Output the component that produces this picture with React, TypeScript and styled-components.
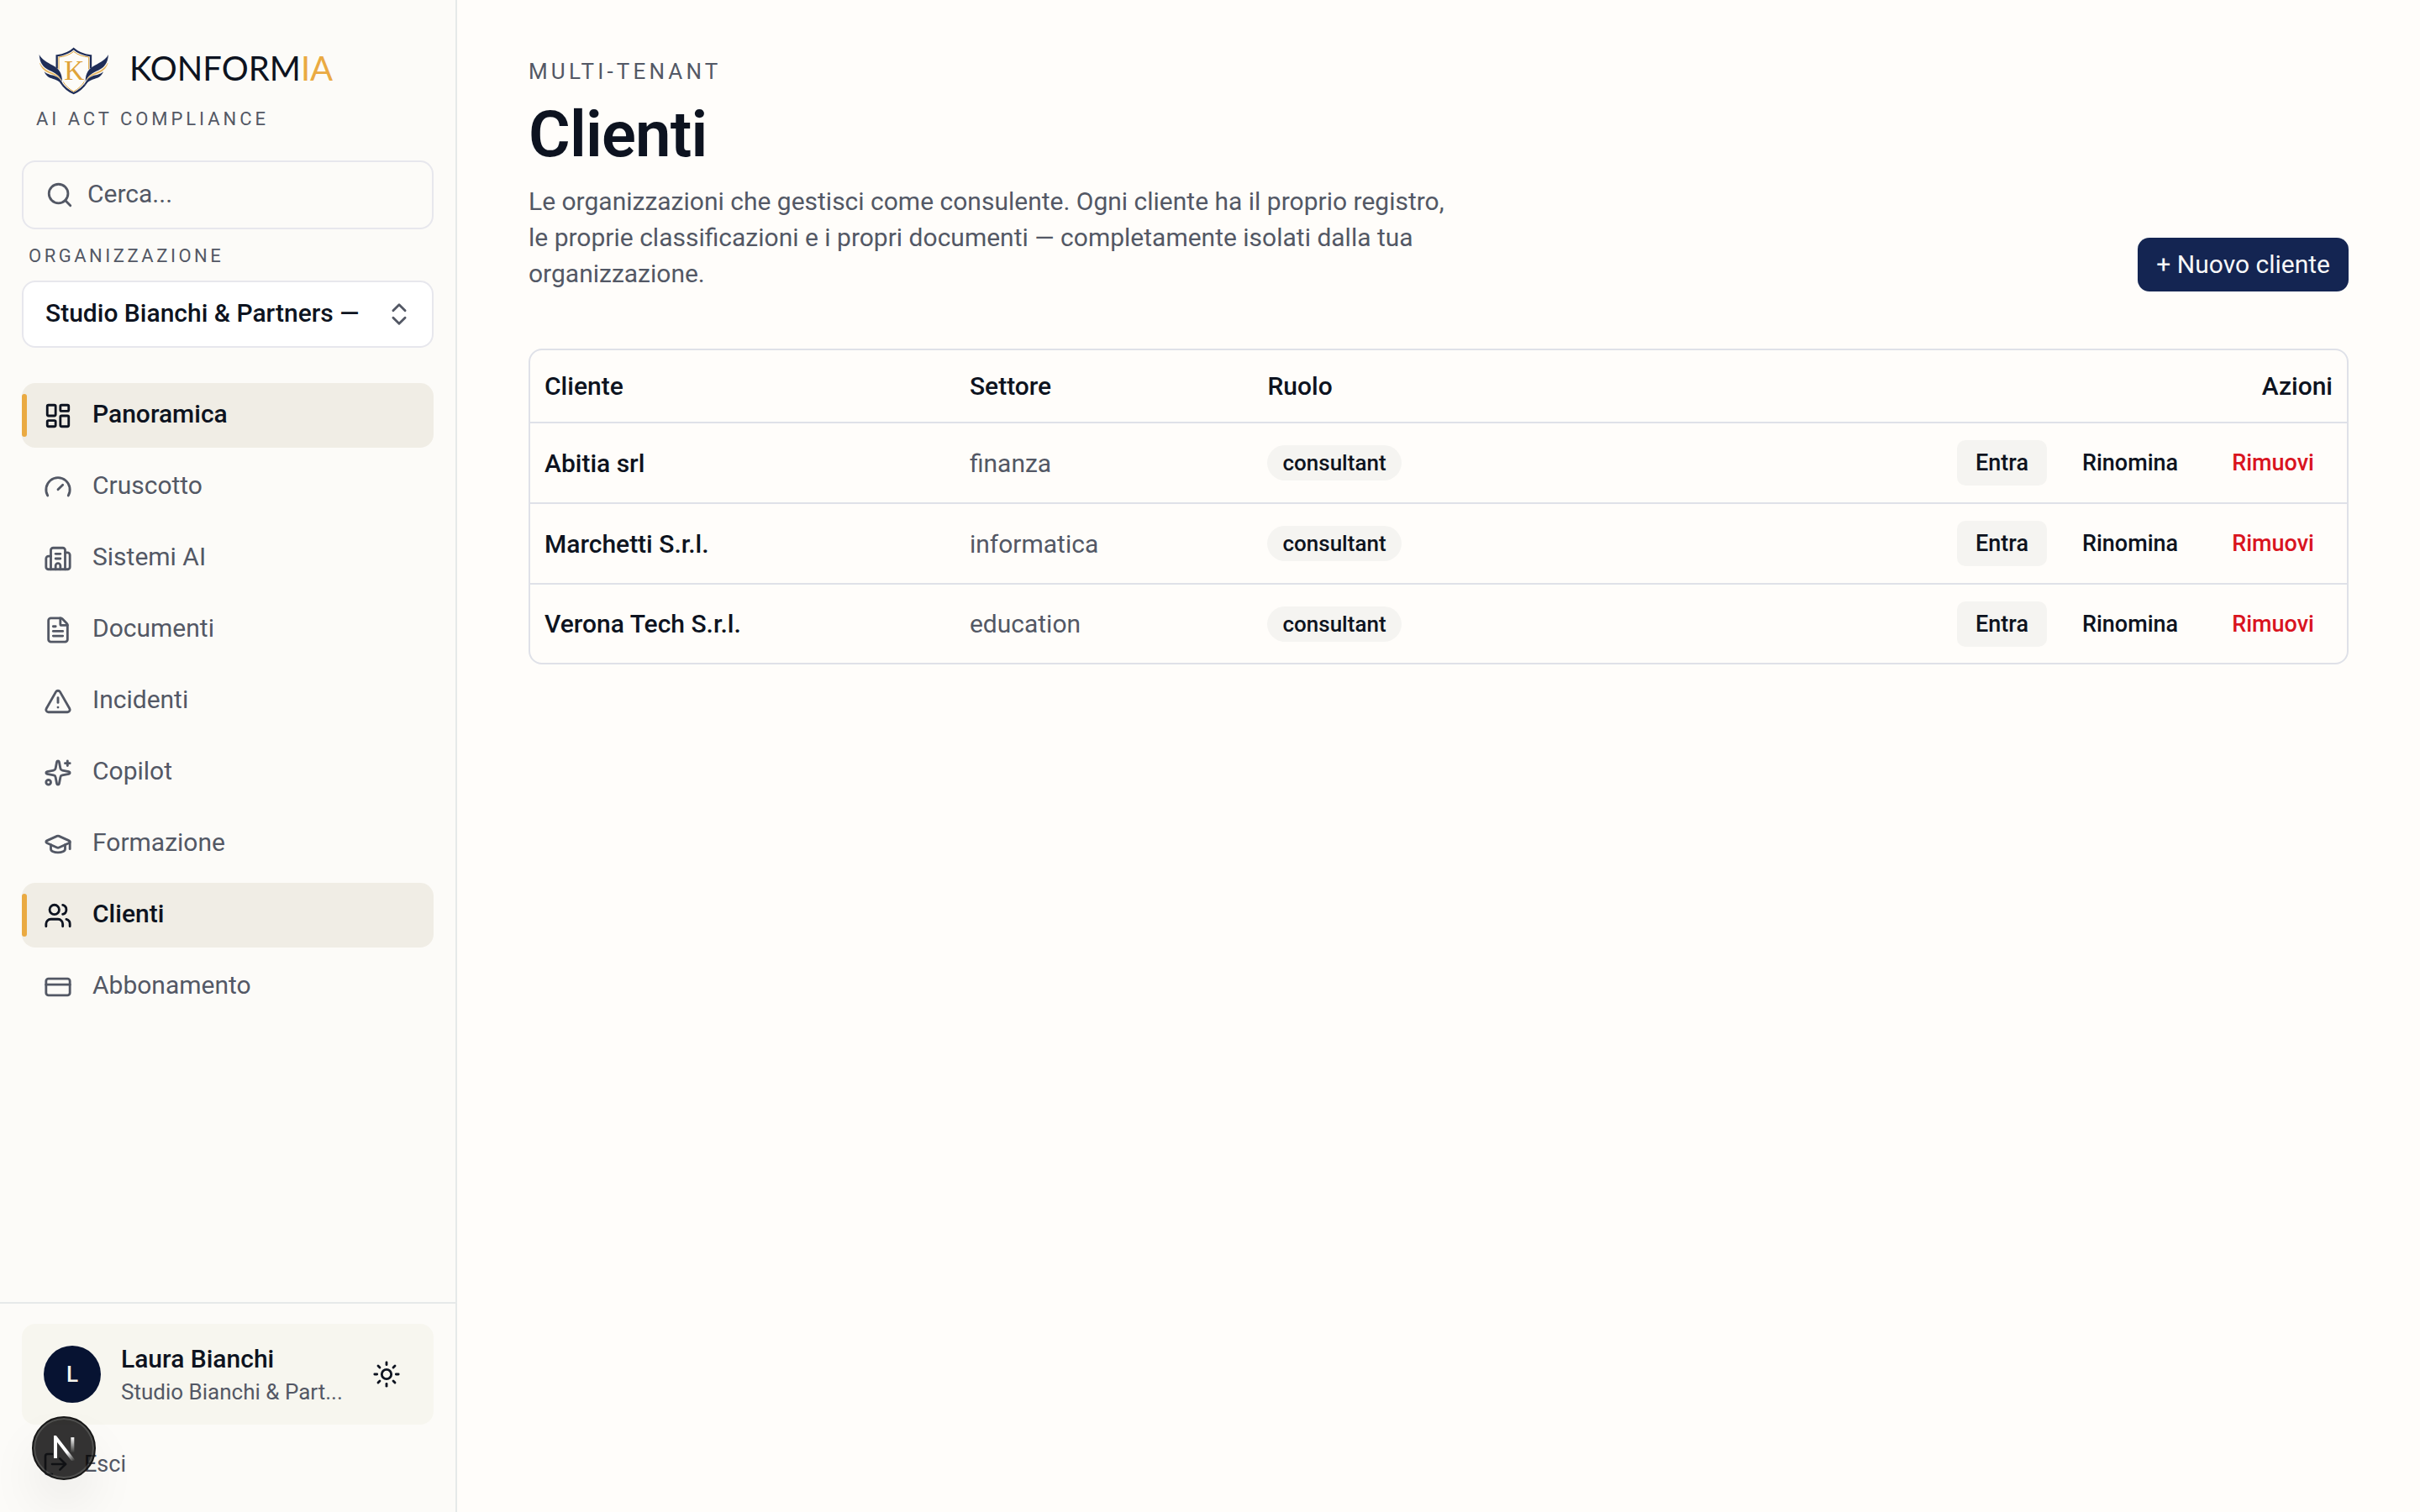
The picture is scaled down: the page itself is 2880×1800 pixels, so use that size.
import React from "react";
import styled, { createGlobalStyle, css } from "styled-components";
import {
  ChevronsUpDown,
  CreditCard,
  FileText,
  GraduationCap,
  LayoutDashboard,
  LogOut,
  Search,
  Sparkles,
  Sun,
  TriangleAlert,
  Users,
} from "lucide-react";

const color = {
  page: "#fffdfa",
  sidebar: "#fcfbf8",
  ink: "#0d1320",
  navy: "#142552",
  deep: "#071332",
  muted: "#535865",
  line: "#dfe1e8",
  softLine: "#e6e9e9",
  field: "#e7e7ed",
  active: "#f0ede5",
  card: "#f7f6ef",
  chip: "#f5f4f1",
  gold: "#eaaa42",
  danger: "#d9141f",
};

const sans = `Roboto, "Liberation Sans", sans-serif`;

const GlobalStyle = createGlobalStyle`
  *, *::before, *::after { box-sizing: border-box; }
  body {
    margin: 0;
    background: ${color.page};
    color: ${color.ink};
    font-family: ${sans};
    font-size: 30px;
    -webkit-font-smoothing: antialiased;
  }
  button, input, select { font: inherit; color: inherit; }
  h1, p { margin: 0; }
`;

const Shell = styled.div`
  display: flex;
  min-height: 100vh;
`;

const Sidebar = styled.aside`
  position: sticky;
  top: 0;
  display: flex;
  flex-direction: column;
  flex: none;
  width: 544px;
  height: 100vh;
  background: ${color.sidebar};
  border-right: 2px solid ${color.softLine};
`;

const SidebarTop = styled.div`
  display: flex;
  flex-direction: column;
  padding: 56px 26px 0;
`;

const Brand = styled.a`
  display: flex;
  align-items: flex-start;
  gap: 24px;
  padding-left: 20px;
  color: ${color.ink};
  text-decoration: none;
`;

const Wordmark = styled.span`
  font-family: Lato, sans-serif;
  font-size: 40px;
  line-height: 50px;
`;

const GoldPart = styled.span`
  color: ${color.gold};
`;

const Overline = styled.p<{ $size?: number }>`
  font-size: ${(p) => p.$size ?? 22}px;
  line-height: 30px;
  letter-spacing: 0.16em;
  text-transform: uppercase;
  color: ${color.muted};
`;

const Tagline = styled(Overline)`
  margin: 14px 0 34px;
  padding-left: 17px;
  letter-spacing: 0.18em;
`;

const SearchField = styled.label`
  display: flex;
  align-items: center;
  gap: 16px;
  height: 82px;
  padding: 0 26px;
  border: 2px solid ${color.field};
  border-radius: 16px;
  color: ${color.muted};
`;

const SearchInput = styled.input`
  flex: 1;
  min-width: 0;
  padding: 0 0 4px;
  border: 0;
  outline: 0;
  background: transparent;
  &::placeholder { color: ${color.muted}; opacity: 1; }
`;

const FieldLabel = styled.label`
  margin: 17px 0 14px;
  padding-left: 8px;
  font-size: 22px;
  line-height: 30px;
  letter-spacing: 0.16em;
  text-transform: uppercase;
  color: ${color.muted};
`;

const SelectBox = styled.div`
  display: grid;
  align-items: center;
  color: ${color.muted};
  & > * { grid-area: 1 / 1; }
  & > svg { justify-self: end; margin-right: 24px; pointer-events: none; }
`;

const Select = styled.select`
  appearance: none;
  width: 100%;
  height: 80px;
  padding: 0 70px 4px 26px;
  border: 2px solid ${color.field};
  border-radius: 16px;
  background: #fff;
  color: ${color.ink};
  font-weight: 500;
`;

const Nav = styled.nav`
  display: flex;
  flex-direction: column;
  gap: 8px;
  padding: 42px 26px 0;
`;

const NavLink = styled.a<{ $active?: boolean }>`
  position: relative;
  display: flex;
  align-items: center;
  gap: 24px;
  height: 77px;
  padding: 0 26px;
  border-radius: 16px;
  color: ${color.muted};
  text-decoration: none;
  ${(p) =>
    p.$active &&
    css`
      background: ${color.active};
      color: ${color.ink};
      font-weight: 500;
      &::before {
        content: "";
        position: absolute;
        left: 0;
        top: 13px;
        bottom: 13px;
        width: 6px;
        border-radius: 3px;
        background: ${color.gold};
      }
    `}
`;

const NavLabel = styled.span`
  padding-bottom: 4px;
`;

const SidebarFooter = styled.div`
  display: flex;
  flex-direction: column;
  gap: 16px;
  margin-top: auto;
  padding: 24px 26px 26px;
  border-top: 2px solid ${color.softLine};
`;

const UserCard = styled.div`
  display: flex;
  align-items: center;
  gap: 24px;
  height: 120px;
  padding: 0 26px;
  border-radius: 16px;
  background: ${color.card};
`;

const Avatar = styled.span`
  display: grid;
  place-items: center;
  flex: none;
  width: 68px;
  height: 68px;
  border-radius: 50%;
  background: ${color.deep};
  color: #f7f6ef;
  font-size: 26px;
  font-weight: 500;
`;

const UserText = styled.div`
  flex: 1;
  min-width: 0;
  white-space: nowrap;
`;

const UserName = styled.p`
  font-weight: 500;
  line-height: 42px;
`;

const UserOrg = styled.p`
  font-size: 26px;
  line-height: 36px;
  color: ${color.muted};
`;

const IconButton = styled.button`
  display: grid;
  place-items: center;
  width: 60px;
  height: 60px;
  padding: 0;
  border: 0;
  background: transparent;
`;

const SignOut = styled.button`
  display: flex;
  align-items: center;
  gap: 18px;
  height: 62px;
  padding: 0 24px;
  border: 0;
  background: transparent;
  color: ${color.muted};
  font-size: 27px;
`;

const DevBadge = styled.button`
  position: fixed;
  left: 38px;
  bottom: 38px;
  display: grid;
  place-items: center;
  width: 76px;
  height: 76px;
  padding: 0;
  border: 2px solid #171717;
  border-radius: 50%;
  background: rgba(0, 0, 0, 0.8);
  box-shadow: inset 0 0 0 2px rgba(255, 255, 255, 0.14), 0 32px 64px -8px rgba(0, 0, 0, 0.1);
`;

const Main = styled.main`
  flex: 1;
  min-width: 0;
  padding: 70px 85px;
`;

const PageHeader = styled.header`
  display: flex;
  align-items: flex-end;
  justify-content: space-between;
  gap: 34px;
  margin-bottom: 68px;
`;

const Intro = styled.div`
  max-width: 1105px;
`;

const Title = styled.h1`
  margin: 18px 0 16px;
  font-size: 76px;
  font-weight: 600;
  line-height: 84px;
  letter-spacing: -0.01em;
`;

const Lead = styled.p`
  line-height: 43px;
  color: ${color.muted};
`;

const PrimaryButton = styled.button`
  flex: none;
  height: 64px;
  padding: 0 22px 2px;
  border: 0;
  border-radius: 14px;
  background: ${color.navy};
  color: #f8f8f8;
`;

const TableFrame = styled.div`
  border: 2px solid ${color.line};
  border-radius: 16px;
  overflow: hidden;
`;

const Table = styled.table`
  width: 100%;
  border-collapse: collapse;
`;

const Row = styled.tr`
  &:not(:last-child), thead & { border-bottom: 2px solid ${color.line}; }
`;

const HeadCell = styled.th<{ $width?: string; $end?: boolean }>`
  width: ${(p) => p.$width ?? "auto"};
  height: 86px;
  padding: 0 17px;
  font-weight: 500;
  text-align: ${(p) => (p.$end ? "right" : "left")};
`;

const Cell = styled.td<{ $strong?: boolean }>`
  height: 96px;
  padding: 0 17px;
  font-weight: ${(p) => (p.$strong ? 500 : 400)};
  color: ${(p) => (p.$strong ? color.ink : color.muted)};
  tr:last-child > & { height: 94px; }
`;

const RoleChip = styled.span`
  display: inline-flex;
  align-items: center;
  height: 42px;
  padding: 0 18px;
  border-radius: 21px;
  background: ${color.chip};
  color: ${color.ink};
  font-size: 26px;
  font-weight: 500;
  vertical-align: middle;
`;

const Actions = styled.div`
  display: flex;
  justify-content: flex-end;
  gap: 20px;
`;

const RowButton = styled.button<{ $tone?: "soft" | "danger" }>`
  height: 54px;
  padding: 0 22px;
  border: 0;
  border-radius: 10px;
  background: ${(p) => (p.$tone === "soft" ? color.chip : "transparent")};
  color: ${(p) => (p.$tone === "danger" ? color.danger : color.ink)};
  font-size: 27px;
  font-weight: 500;
`;

const Crest = () => (
  <svg width="84" height="57" viewBox="46 47 252 171" aria-hidden="true">
    <path
      d="M171 53C155 68 134 75 111 78V122C112 160 132 194 171 212C210 194 230 160 232 122V78C208 75 187 68 171 53Z"
      fill="none"
      stroke="#1f2d57"
      strokeWidth="7"
    />
    <path
      d="M171 63C156 75 138 81 118 83V122C119 156 138 188 171 206C204 188 223 156 225 122V83C204 81 186 75 171 63Z"
      fill="#fdfcf8"
      stroke="#dfa338"
      strokeWidth="3"
    />
    <g id="wing">
      <path d="M104 119L122 128L133 152L134 184C122 168 112 160 98 152Z" fill="#fcfbf8" />
      <path d="M48 74C58 92 76 102 96 112C118 123 130 140 130 170C120 147 104 139 84 130C62 120 50 104 48 74Z" fill="#1f2d57" />
      <path d="M50 104C60 124 78 133 96 140C110 146 120 153 127 166C115 151 104 147 90 142C70 135 56 125 50 104Z" fill="#e3ae52" stroke="#e3ae52" strokeWidth="1" />
      <path d="M66 135C78 146 92 146 106 151C120 156 131 170 138 190C124 172 112 165 98 161C82 157 72 150 66 135Z" fill="#1f2d57" />
    </g>
    <use href="#wing" transform="translate(343 0) scale(-1 1)" />
    <text x="173" y="165" textAnchor="middle" fontFamily="Liberation Serif, serif" fontSize="100" fill="#dfa338">
      K
    </text>
  </svg>
);

const Gauge = ({ size = 34 }: { size?: number }) => (
  <svg width={size} height={size} viewBox="0 0 24 24" fill="none" stroke="currentColor" strokeWidth="2" strokeLinecap="round" strokeLinejoin="round" aria-hidden="true">
    <path d="m12 14 4-4" />
    <path d="M3.34 19a10 10 0 1 1 17.32 0" />
  </svg>
);

const Offices = ({ size = 34 }: { size?: number }) => (
  <svg width={size} height={size} viewBox="0 0 24 24" fill="none" stroke="currentColor" strokeWidth="2" strokeLinecap="round" strokeLinejoin="round" aria-hidden="true">
    <path d="M10 12h4" />
    <path d="M10 8h4" />
    <path d="M14 21v-3a2 2 0 0 0-4 0v3" />
    <path d="M6 10H4a2 2 0 0 0-2 2v7a2 2 0 0 0 2 2h16a2 2 0 0 0 2-2V9a2 2 0 0 0-2-2h-2" />
    <path d="M6 21V5a2 2 0 0 1 2-2h8a2 2 0 0 1 2 2v16" />
  </svg>
);

const DevMark = () => (
  <svg width="30" height="30" viewBox="0 0 14 14" fill="none" aria-hidden="true">
    <defs>
      <linearGradient id="diag" x1="9" y1="9" x2="12.8" y2="14" gradientUnits="userSpaceOnUse">
        <stop stopColor="#fff" />
        <stop offset="1" stopColor="#fff" stopOpacity="0" />
      </linearGradient>
      <linearGradient id="stem" x1="11.8" y1="1" x2="11.8" y2="9.6" gradientUnits="userSpaceOnUse">
        <stop stopColor="#fff" />
        <stop offset="1" stopColor="#fff" stopOpacity="0" />
      </linearGradient>
    </defs>
    <path d="M13.3 15.2L2.34 1V12.6" stroke="url(#diag)" strokeWidth="1.86" />
    <path d="M11.825 1V12.6" stroke="url(#stem)" strokeWidth="1.86" />
  </svg>
);

const navItems = [
  { label: "Panoramica", icon: LayoutDashboard, active: true },
  { label: "Cruscotto", icon: Gauge },
  { label: "Sistemi AI", icon: Offices },
  { label: "Documenti", icon: FileText },
  { label: "Incidenti", icon: TriangleAlert },
  { label: "Copilot", icon: Sparkles },
  { label: "Formazione", icon: GraduationCap },
  { label: "Clienti", icon: Users, active: true },
  { label: "Abbonamento", icon: CreditCard },
];

const clients = [
  { name: "Abitia srl", sector: "finanza", role: "consultant" },
  { name: "Marchetti S.r.l.", sector: "informatica", role: "consultant" },
  { name: "Verona Tech S.r.l.", sector: "education", role: "consultant" },
];

export default function App() {
  return (
    <>
      <GlobalStyle />
      <Shell>
        <Sidebar>
          <SidebarTop>
            <Brand href="#">
              <Crest />
              <Wordmark>
                KONFORM<GoldPart>IA</GoldPart>
              </Wordmark>
            </Brand>
            <Tagline>AI Act Compliance</Tagline>
            <SearchField>
              <Search size={34} aria-hidden="true" />
              <SearchInput type="search" placeholder="Cerca..." aria-label="Cerca" />
            </SearchField>
            <FieldLabel htmlFor="org">Organizzazione</FieldLabel>
            <SelectBox>
              <Select id="org">
                <option>Studio Bianchi &amp; Partners —</option>
              </Select>
              <ChevronsUpDown size={34} aria-hidden="true" />
            </SelectBox>
          </SidebarTop>
          <Nav>
            {navItems.map(({ label, icon: Icon, active }) => (
              <NavLink key={label} href="#" $active={active}>
                <Icon size={34} />
                <NavLabel>{label}</NavLabel>
              </NavLink>
            ))}
          </Nav>
          <SidebarFooter>
            <UserCard>
              <Avatar>L</Avatar>
              <UserText>
                <UserName>Laura Bianchi</UserName>
                <UserOrg>Studio Bianchi &amp; Part...</UserOrg>
              </UserText>
              <IconButton aria-label="Cambia tema">
                <Sun size={34} />
              </IconButton>
            </UserCard>
            <SignOut>
              <LogOut size={32} />
              Esci
            </SignOut>
          </SidebarFooter>
        </Sidebar>
        <Main>
          <PageHeader>
            <Intro>
              <Overline $size={26}>Multi-tenant</Overline>
              <Title>Clienti</Title>
              <Lead>
                Le organizzazioni che gestisci come consulente. Ogni cliente ha il proprio registro, le proprie
                classificazioni e i propri documenti — completamente isolati dalla tua organizzazione.
              </Lead>
            </Intro>
            <PrimaryButton>+ Nuovo cliente</PrimaryButton>
          </PageHeader>
          <TableFrame>
            <Table>
              <thead>
                <Row>
                  <HeadCell $width="23.4%">Cliente</HeadCell>
                  <HeadCell $width="16.4%">Settore</HeadCell>
                  <HeadCell>Ruolo</HeadCell>
                  <HeadCell $end>Azioni</HeadCell>
                </Row>
              </thead>
              <tbody>
                {clients.map((client) => (
                  <Row key={client.name}>
                    <Cell $strong>{client.name}</Cell>
                    <Cell>{client.sector}</Cell>
                    <Cell>
                      <RoleChip>{client.role}</RoleChip>
                    </Cell>
                    <Cell>
                      <Actions>
                        <RowButton $tone="soft">Entra</RowButton>
                        <RowButton>Rinomina</RowButton>
                        <RowButton $tone="danger">Rimuovi</RowButton>
                      </Actions>
                    </Cell>
                  </Row>
                ))}
              </tbody>
            </Table>
          </TableFrame>
        </Main>
      </Shell>
      <DevBadge aria-label="Strumenti di sviluppo">
        <DevMark />
      </DevBadge>
    </>
  );
}
